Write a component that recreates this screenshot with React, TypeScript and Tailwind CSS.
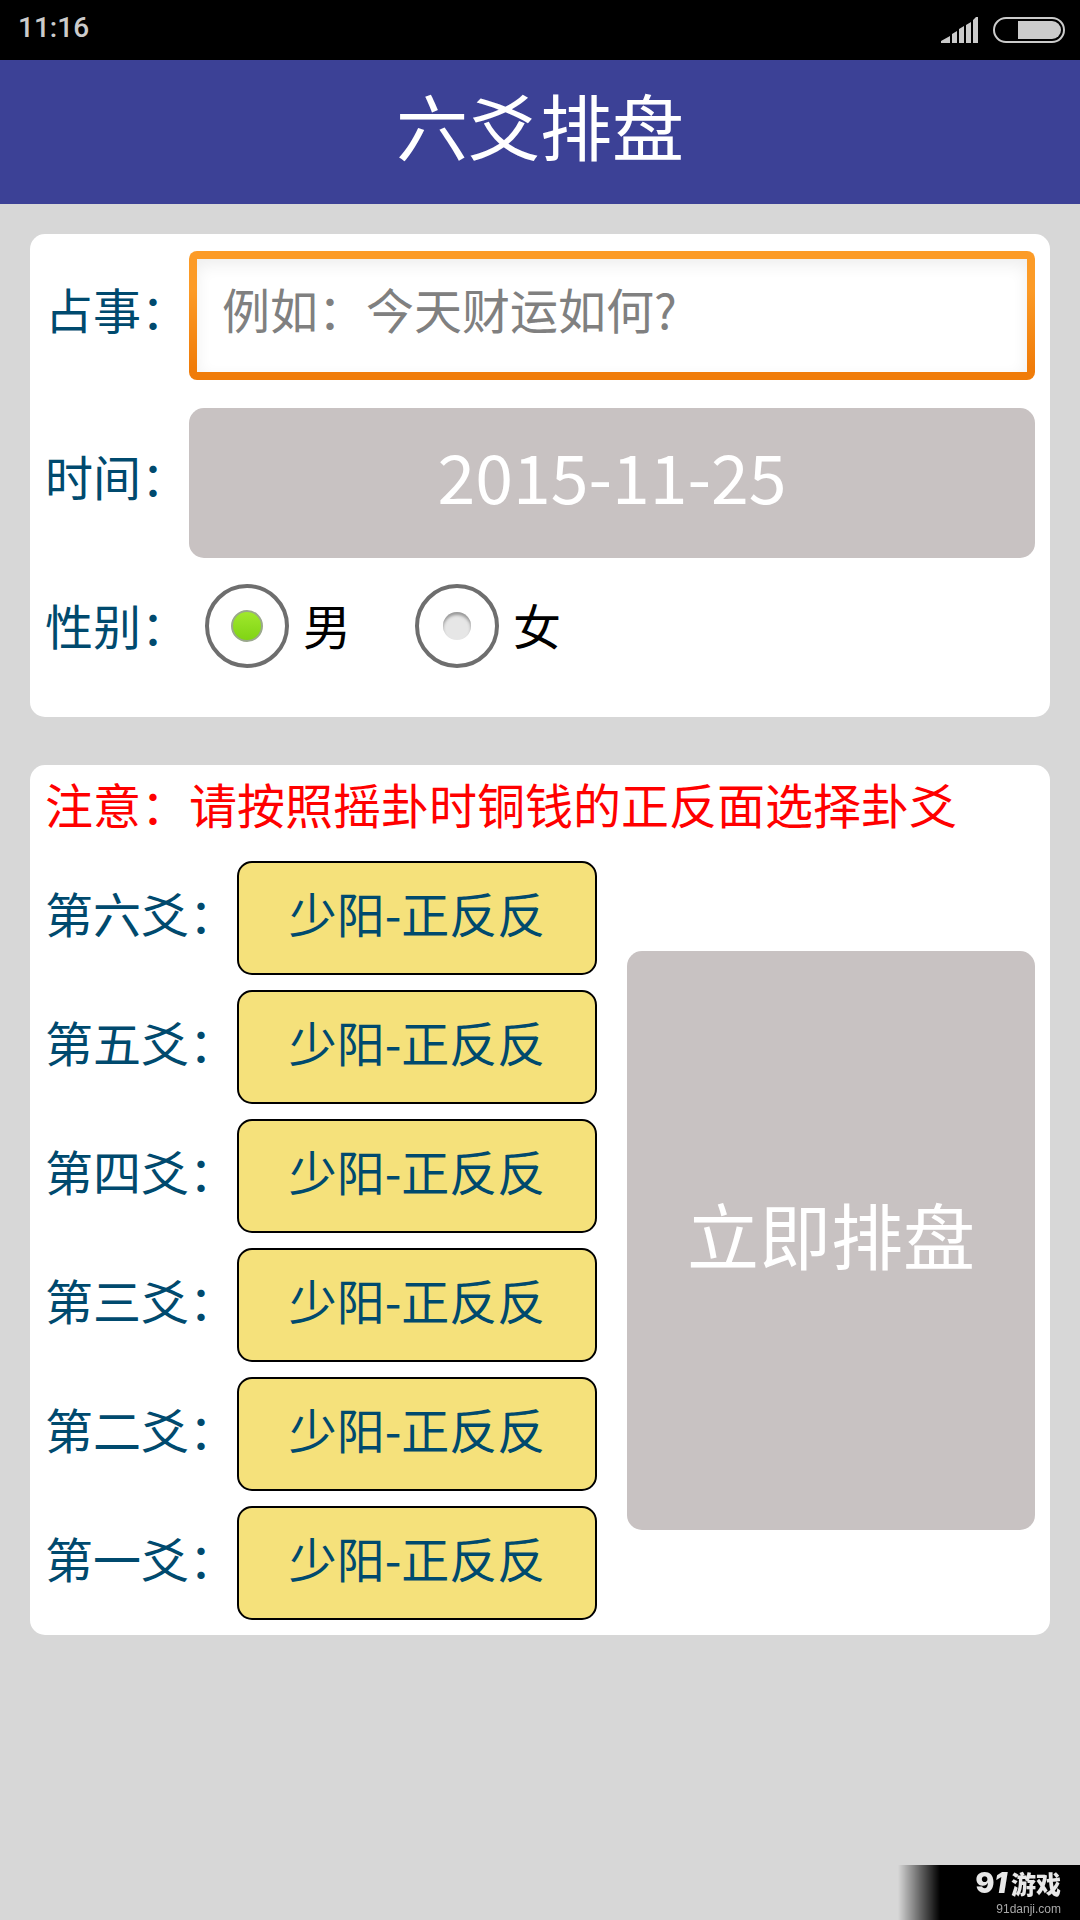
import React, { useState } from 'react';

const lines = [
  { id: 'yao6', label: '第六爻：', value: '少阳-正反反' },
  { id: 'yao5', label: '第五爻：', value: '少阳-正反反' },
  { id: 'yao4', label: '第四爻：', value: '少阳-正反反' },
  { id: 'yao3', label: '第三爻：', value: '少阳-正反反' },
  { id: 'yao2', label: '第二爻：', value: '少阳-正反反' },
  { id: 'yao1', label: '第一爻：', value: '少阳-正反反' },
];

const genders = [
  { id: 'male', label: '男' },
  { id: 'female', label: '女' },
];

const StatusBar: React.FC = () => (
  <div className="flex h-[60px] items-center justify-between bg-black pl-[18px] pr-[15px] text-[#cbcbcb]">
    <span className="pb-1 font-[Roboto,sans-serif] text-[28px] font-medium leading-none">11:16</span>
    <div className="flex items-center gap-[15px]">
      <svg width="37" height="26" viewBox="0 0 37 26" fill="currentColor" aria-label="信号">
        <path d="M0 26v-2l9-5v7zM11 26v-9l5-3v12zM18 26V12l5-3v17zM25 26V8l5-3v21zM32 26V3l3-3h2v26z" />
      </svg>
      <svg width="72" height="26" viewBox="0 0 72 26" aria-label="电量">
        <rect x="1" y="1" width="70" height="24" rx="12" fill="none" stroke="currentColor" strokeWidth="2" />
        <path d="M25 4h34a9 9 0 0 1 0 18H25z" fill="currentColor" />
      </svg>
    </div>
  </div>
);

const Watermark: React.FC = () => (
  <div className="fixed bottom-0 right-0 flex h-[55px] w-[182px] flex-col items-end justify-between bg-[linear-gradient(to_right,transparent,#000_42px)] pb-[5px] pr-[19px] pt-1">
    <div className="flex items-center gap-1 text-[#e8e8e8]">
      <span className="font-[Inter,sans-serif] text-[28px] font-black leading-7">
        9<i>1</i>
      </span>
      <span className="text-[25px] font-black leading-7">游戏</span>
    </div>
    <span className="font-['Liberation_Sans',sans-serif] text-xs leading-3 text-[#a8a8a8]">91danji.com</span>
  </div>
);

export default function App() {
  const [question, setQuestion] = useState('');
  const [gender, setGender] = useState('male');

  return (
    <div className="min-h-screen bg-[#d7d7d7] font-['Noto_Sans_CJK_SC',sans-serif] text-[48px] leading-[72px] text-[#004a6e]">
      <StatusBar />

      <header className="flex h-36 items-center justify-center bg-[#3c4196] pb-4">
        <h1 className="text-[72px] leading-none text-white">六爻排盘</h1>
      </header>

      <main className="flex flex-col gap-12 p-[30px]">
        <section className="rounded-[15px] bg-white px-[15px] pb-[49px] pt-[17px]">
          <div className="flex items-center">
            <label htmlFor="question" className="w-36 shrink-0 pb-4">占事：</label>
            <input
              id="question"
              type="text"
              value={question}
              onChange={(e) => setQuestion(e.target.value)}
              placeholder="例如：今天财运如何?"
              className="h-[129px] min-w-0 flex-1 rounded-lg border-8 border-transparent pb-4 pl-[25px] shadow-[inset_0_6px_16px_rgba(0,0,0,0.07)] outline-none [background:linear-gradient(#fff,#fff)_padding-box,linear-gradient(#fc9b27_30%,#f07c09_90%)_border-box] placeholder:text-[#808080]"
            />
          </div>

          <div className="mt-7 flex items-center">
            <label htmlFor="date" className="w-36 shrink-0 pb-4">时间：</label>
            <button id="date" type="button" className="h-[150px] flex-1 rounded-[15px] bg-[#c8c2c2] pb-4 text-[68px] text-white">
              2015-11-25
            </button>
          </div>

          <div className="mt-[26px] flex items-center" role="radiogroup" aria-labelledby="gender-label">
            <span id="gender-label" className="w-36 shrink-0 pb-1">性别：</span>
            <div className="ml-4 flex gap-16 text-black">
              {genders.map((g) => (
                <label key={g.id} className="flex items-center gap-[14px]">
                  <input
                    type="radio"
                    name="gender"
                    checked={gender === g.id}
                    onChange={() => setGender(g.id)}
                    className="grid size-[84px] appearance-none place-items-center rounded-full border-4 border-[#6e6e6e] bg-white before:size-7 before:rounded-full before:bg-[#e6e6e6] before:shadow-[inset_0_3px_3px_#999] before:content-[''] checked:before:size-8 checked:before:border-2 checked:before:border-[#9aa88c] checked:before:bg-[linear-gradient(#a0e82c,#80d414)] checked:before:shadow-none"
                  />
                  <span className="pb-1">{g.label}</span>
                </label>
              ))}
            </div>
          </div>
        </section>

        <section className="rounded-[15px] bg-white px-[15px] pb-[15px]">
          <p className="mb-5 leading-[76px] text-[#ff0000]">注意：请按照摇卦时铜钱的正反面选择卦爻</p>
          <div className="flex items-center gap-[30px]">
            <div className="flex flex-col gap-[15px]">
              {lines.map((line) => (
                <div key={line.id} className="flex items-center">
                  <label htmlFor={line.id} className="w-48 shrink-0 pb-3">{line.label}</label>
                  <button
                    id={line.id}
                    type="button"
                    className="h-[114px] w-[360px] rounded-[15px] border-2 border-black bg-[#f5e17b] pb-3"
                  >
                    {line.value}
                  </button>
                </div>
              ))}
            </div>
            <button type="submit" className="my-[90px] flex-1 self-stretch rounded-[15px] bg-[#c8c2c2] pb-4 text-[72px] text-white">
              立即排盘
            </button>
          </div>
        </section>
      </main>

      <Watermark />
    </div>
  );
}
